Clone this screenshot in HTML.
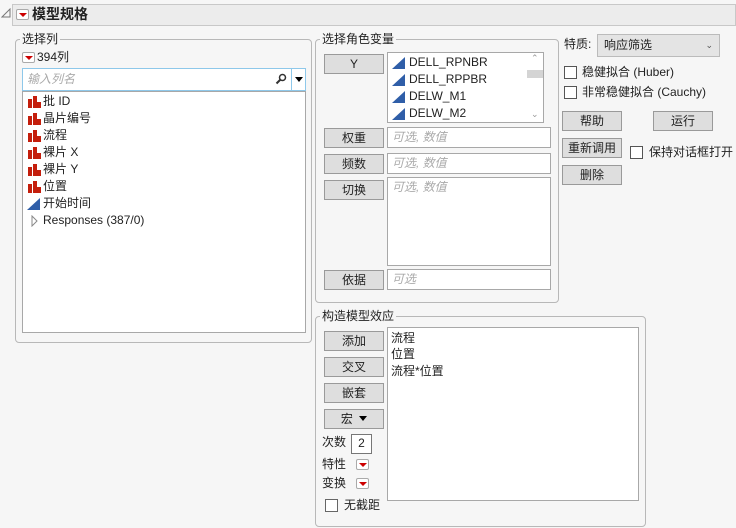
<!DOCTYPE html>
<html><head><meta charset="utf-8"><style>
*{box-sizing:border-box;margin:0;padding:0}
body{width:736px;height:528px;background:#f6f6f6;font-family:"Liberation Sans","Noto Sans CJK SC",sans-serif;font-size:12px;color:#222;position:relative;overflow:hidden}
.a{position:absolute}
.grp{position:absolute;border:1px solid #b8b8b8;border-radius:4px}
.lbl{position:absolute;background:#f6f6f6;padding:0 2px;font-size:12px;line-height:14px}
.btn{position:absolute;width:60px;height:20px;background:#dedede;border:1px solid #9a9a9a;text-align:center;line-height:18px;font-size:12px}
.box{position:absolute;background:#fff;border:1px solid #a8a8a8}
.ph{color:#aaa;font-style:italic;padding-left:4px;line-height:18px}
.red{position:absolute;width:13px;height:11px;border:1px solid #aaa;border-radius:2px;background:#fff}
.red:after{content:"";position:absolute;left:2px;top:3px;border-left:4px solid transparent;border-right:4px solid transparent;border-top:4px solid #c00}
.bar{position:absolute;left:5px;width:13px;height:12px}
.bar i{position:absolute;bottom:0;background:#c41e0c;width:4px}
.tri{position:absolute;width:0;height:0;border-left:13px solid transparent;border-bottom:12px solid #2f5ea8}
.cb{position:absolute;width:13px;height:13px;background:#fff;border:1px solid #555}
.it{position:absolute;line-height:17px}
</style></head><body>
<svg class="a" style="left:1px;top:8px" width="10" height="10"><path d="M1 9 L9 1 L9 9 Z" fill="none" stroke="#777" stroke-width="1"/></svg>
<div class="a" style="left:12px;top:4px;width:724px;height:22px;background:#ececec;border:1px solid #c8c8c8"></div>
<div class="red" style="left:16px;top:9px"></div>
<div class="a" style="left:32px;top:5px;font-size:14px;font-weight:bold;line-height:18px">模型规格</div>

<div class="grp" style="left:15px;top:39px;width:297px;height:304px"></div>
<div class="lbl" style="left:20px;top:32px">选择列</div>
<div class="red" style="left:22px;top:52px"></div>
<div class="a" style="left:37px;top:50px;line-height:14px">394列</div>
<div class="box" style="left:22px;top:68px;width:284px;height:23px;border-color:#8ec8ea"><span class="ph" style="line-height:20px">输入列名</span>
<div class="a" style="left:268px;top:0;width:1px;height:21px;background:#8ec8ea"></div>
<svg class="a" style="left:252px;top:4px" width="12" height="12"><circle cx="7.5" cy="4.5" r="3" fill="none" stroke="#333" stroke-width="1.5"/><path d="M5.5 6.5 L1.5 10.5" stroke="#333" stroke-width="2"/></svg>
<div class="a" style="left:272px;top:8px;border-left:4px solid transparent;border-right:4px solid transparent;border-top:5px solid #000"></div></div>
<div class="box" style="left:22px;top:91px;width:284px;height:242px">
<div class="bar" style="top:4px"><i style="left:0;height:9px"></i><i style="left:5px;height:12px"></i><i style="left:9px;height:6px"></i></div><div class="it" style="left:20px;top:1px">批 ID</div>
<div class="bar" style="top:21px"><i style="left:0;height:9px"></i><i style="left:5px;height:12px"></i><i style="left:9px;height:6px"></i></div><div class="it" style="left:20px;top:18px">晶片编号</div>
<div class="bar" style="top:38px"><i style="left:0;height:9px"></i><i style="left:5px;height:12px"></i><i style="left:9px;height:6px"></i></div><div class="it" style="left:20px;top:35px">流程</div>
<div class="bar" style="top:55px"><i style="left:0;height:9px"></i><i style="left:5px;height:12px"></i><i style="left:9px;height:6px"></i></div><div class="it" style="left:20px;top:52px">裸片 X</div>
<div class="bar" style="top:72px"><i style="left:0;height:9px"></i><i style="left:5px;height:12px"></i><i style="left:9px;height:6px"></i></div><div class="it" style="left:20px;top:69px">裸片 Y</div>
<div class="bar" style="top:89px"><i style="left:0;height:9px"></i><i style="left:5px;height:12px"></i><i style="left:9px;height:6px"></i></div><div class="it" style="left:20px;top:86px">位置</div>
<div class="tri" style="left:4px;top:106px"></div><div class="it" style="left:20px;top:103px">开始时间</div>
<svg class="a" style="left:8px;top:123px" width="8" height="12"><path d="M1 1 L6 6 L1 11 Z" fill="none" stroke="#888"/></svg>
<div class="it" style="left:20px;top:120px">Responses (387/0)</div>
</div>

<div class="grp" style="left:315px;top:39px;width:244px;height:264px"></div>
<div class="lbl" style="left:320px;top:32px">选择角色变量</div>
<div class="btn" style="left:324px;top:54px">Y</div>
<div class="box" style="left:387px;top:52px;width:157px;height:71px">
<div class="tri" style="left:4px;top:4px"></div><div class="it" style="left:21px;top:1px">DELL_RPNBR</div>
<div class="tri" style="left:4px;top:21px"></div><div class="it" style="left:21px;top:18px">DELL_RPPBR</div>
<div class="tri" style="left:4px;top:38px"></div><div class="it" style="left:21px;top:35px">DELW_M1</div>
<div class="tri" style="left:4px;top:55px"></div><div class="it" style="left:21px;top:52px">DELW_M2</div>
<div class="a" style="left:139px;top:17px;width:16px;height:8px;background:#d4d4d4"></div>
<div class="a" style="left:143px;top:0;font-size:9px;color:#999">⌃</div>
<div class="a" style="left:143px;top:56px;font-size:9px;color:#999">⌄</div>
</div>
<div class="btn" style="left:324px;top:128px">权重</div>
<div class="box" style="left:387px;top:127px;width:164px;height:21px"><span class="ph">可选, 数值</span></div>
<div class="btn" style="left:324px;top:154px">频数</div>
<div class="box" style="left:387px;top:153px;width:164px;height:21px"><span class="ph">可选, 数值</span></div>
<div class="btn" style="left:324px;top:180px">切换</div>
<div class="box" style="left:387px;top:177px;width:164px;height:89px"><span class="ph">可选, 数值</span></div>
<div class="btn" style="left:324px;top:270px">依据</div>
<div class="box" style="left:387px;top:269px;width:164px;height:21px"><span class="ph">可选</span></div>

<div class="a" style="left:564px;top:36px;line-height:16px">特质:</div>
<div class="a" style="left:597px;top:34px;width:123px;height:23px;background:#e4e4e4;border:1px solid #bbb;line-height:21px;padding-left:6px">响应筛选<span class="a" style="right:6px;top:0;font-size:9px;color:#555">⌄</span></div>
<div class="cb" style="left:564px;top:66px"></div><div class="a" style="left:582px;top:64px;line-height:16px">稳健拟合 (Huber)</div>
<div class="cb" style="left:564px;top:86px"></div><div class="a" style="left:582px;top:84px;line-height:16px">非常稳健拟合 (Cauchy)</div>
<div class="btn" style="left:562px;top:111px">帮助</div>
<div class="btn" style="left:653px;top:111px">运行</div>
<div class="btn" style="left:562px;top:138px">重新调用</div>
<div class="cb" style="left:630px;top:146px"></div><div class="a" style="left:649px;top:144px;line-height:16px">保持对话框打开</div>
<div class="btn" style="left:562px;top:165px">删除</div>

<div class="grp" style="left:315px;top:316px;width:331px;height:211px"></div>
<div class="lbl" style="left:320px;top:309px">构造模型效应</div>
<div class="btn" style="left:324px;top:331px">添加</div>
<div class="btn" style="left:324px;top:357px">交叉</div>
<div class="btn" style="left:324px;top:383px">嵌套</div>
<div class="btn" style="left:324px;top:409px">宏 <span style="display:inline-block;border-left:4px solid transparent;border-right:4px solid transparent;border-top:5px solid #000;vertical-align:2px;margin-left:3px"></span></div>
<div class="a" style="left:322px;top:434px;line-height:16px">次数</div>
<div class="box" style="left:351px;top:434px;width:21px;height:20px;border-color:#777;text-align:center;line-height:17px">2</div>
<div class="a" style="left:322px;top:456px;line-height:16px">特性</div><div class="red" style="left:356px;top:459px"></div>
<div class="a" style="left:322px;top:475px;line-height:16px">变换</div><div class="red" style="left:356px;top:478px"></div>
<div class="cb" style="left:325px;top:499px;border-color:#666"></div><div class="a" style="left:344px;top:497px;line-height:16px">无截距</div>
<div class="box" style="left:387px;top:327px;width:252px;height:174px">
<div class="it" style="left:3px;top:2px">流程</div>
<div class="it" style="left:3px;top:18px">位置</div>
<div class="it" style="left:3px;top:35px">流程*位置</div>
</div>
</body></html>
